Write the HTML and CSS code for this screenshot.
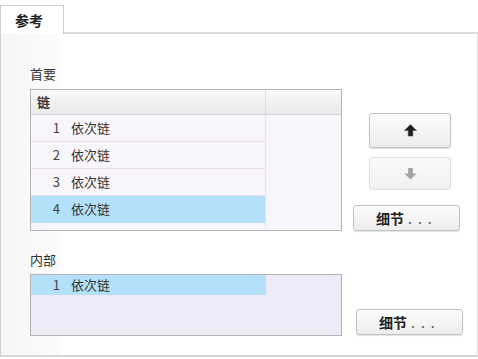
FILE: index.html
```html
<!DOCTYPE html>
<html lang="zh">
<head>
    <meta charset="UTF-8">
    <title>参考</title>
    <link rel="stylesheet" href="styles.css">
</head>
<body>
    <div class="tabs">
        <div class="tab active">参考</div>
    </div>
    <div class="panel">
        <div class="label">首要</div>
        <div class="section">
            <div class="list primary">
                <div class="list-head">
                    <div class="cell-main">链</div>
                    <div class="cell-fill"></div>
                </div>
                <div class="list-body">
                    <div class="rows">
                        <div class="row"><span class="num">1</span>依次链</div>
                        <div class="row"><span class="num">2</span>依次链</div>
                        <div class="row"><span class="num">3</span>依次链</div>
                        <div class="row selected"><span class="num">4</span>依次链</div>
                    </div>
                    <div class="cell-fill"></div>
                </div>
            </div>
            <div class="side">
                <button class="btn arrow">
                    <svg class="icon" viewBox="0 0 14 14"><path d="M7 0.5 L13.5 7 L9.5 7 L9.5 13 L4.5 13 L4.5 7 L0.5 7 Z" fill="#1e1e1e" stroke="#555" stroke-width="0.6"/></svg>
                </button>
                <button class="btn arrow disabled">
                    <svg class="icon" viewBox="0 0 14 14"><path d="M7 13.5 L13.5 7 L9.5 7 L9.5 1 L4.5 1 L4.5 7 L0.5 7 Z" fill="#a3a3a3"/></svg>
                </button>
                <button class="btn detail">细节<span class="dots">...</span></button>
            </div>
        </div>

        <div class="label second">内部</div>
        <div class="section">
            <div class="list inner">
                <div class="list-body">
                    <div class="rows">
                        <div class="row short selected"><span class="num">1</span>依次链</div>
                    </div>
                </div>
            </div>
            <div class="side bottom">
                <button class="btn detail">细节<span class="dots">...</span></button>
            </div>
        </div>
    </div>
</body>
</html>
```
FILE: styles.css
```css
* {box-sizing: border-box;}
body {
    margin: 0;
    background: #fff;
    font-family: "Noto Sans CJK SC", "DejaVu Sans", sans-serif;
    font-size: 13px;
    color: #333;
}
.tabs {
    display: flex;
    height: 32px;
    padding-top: 5px;
}
.tab {
    width: 64px;
    border: 1px solid #cfcfcf;
    border-bottom: none;
    background: #fff;
    font-weight: bold;
    font-size: 14px;
    color: #222;
    padding-left: 14px;
    line-height: 28px;
    position: relative;
    z-index: 1;
    height: 29px;
}
.panel {
    height: 325px;
    border-top: 2px solid #d9d9d9;
    border-left: 1px solid #cfcfcf;
    border-right: 1px solid #e0e0e0;
    border-bottom: 2px solid #d6d6d6;
    padding: 31px 0 0 29px;
    background: linear-gradient(to right, #f6f6f6 0, #fbfbfb 58px, #fff 60px);
}
.label {
    line-height: 18px;
    height: 18px;
    margin-bottom: 6px;
    color: #333;
}
.label.second {
    margin-top: 20px;
    margin-bottom: 5px;
}
.section {
    display: flex;
}
.list {
    width: 312px;
    border: 1px solid #b4b4b4;
    background: #f8f6fb;
}
.list-head {
    display: flex;
    height: 25px;
    border-bottom: 1px solid #d4d4d4;
    background: linear-gradient(#f9f9f9, #e9e9e9);
}
.cell-main {
    width: 235px;
    padding-left: 6px;
    line-height: 24px;
    font-weight: bold;
    color: #333;
    border-right: 1px solid #dedede;
}
.list-body {
    display: flex;
    height: 113px;
}
.rows {
    width: 235px;
    border-right: 1px solid #e6e3ea;
}
.list-body .cell-fill {
    flex: 1;
}
.row {
    height: 27px;
    line-height: 26px;
    border-bottom: 1px solid #e8e2ee;
    color: #333;
}
.row.selected {
    background: #b2e1f9;
    border-bottom-color: #b2e1f9;
}
.num {
    display: inline-block;
    width: 40px;
    text-align: right;
    padding-right: 11px;
    color: #444;
}
.inner {
    height: 62px;
    background: #efeaf7;
}
.inner .list-body {
    height: 60px;
}
.inner .rows {
    border-right: none;
}
.row.short {
    height: 20px;
    line-height: 19px;
    border-bottom: none;
}
.side {
    width: 110px;
    margin-left: 11px;
    display: flex;
    flex-direction: column;
    align-items: flex-start;
    padding-top: 24px;
}
.side.bottom {
    padding-top: 35px;
    padding-left: 3px;
}
.btn {
    font-family: "Noto Sans CJK SC", "DejaVu Sans", sans-serif;
    border: 1px solid #c2c2c2;
    border-radius: 3px;
    background: linear-gradient(#fdfdfd, #ececec);
    box-shadow: 0 1px 1px rgba(0, 0, 0, 0.12);
    padding: 0;
    color: #222;
    display: flex;
    align-items: center;
    justify-content: center;
}
.icon {
    width: 13px;
    height: 13px;
    flex-shrink: 0;
}
.arrow {
    width: 82px;
    height: 35px;
    margin-left: 16px;
}
.arrow.disabled {
    height: 33px;
    margin-top: 9px;
    border-color: #e0e0e0;
    background: linear-gradient(#fafafa, #f1f1f1);
    box-shadow: none;
}
.detail {
    width: 107px;
    height: 26px;
    margin-top: 15px;
    font-size: 14px;
    font-weight: bold;
    color: #222;
    justify-content: flex-start;
    padding-left: 22px;
}
.side.bottom .detail {
    margin-top: 0;
}
.dots {
    letter-spacing: 6px;
    margin-left: 4px;
    font-weight: normal;
    color: #555;
}
```
